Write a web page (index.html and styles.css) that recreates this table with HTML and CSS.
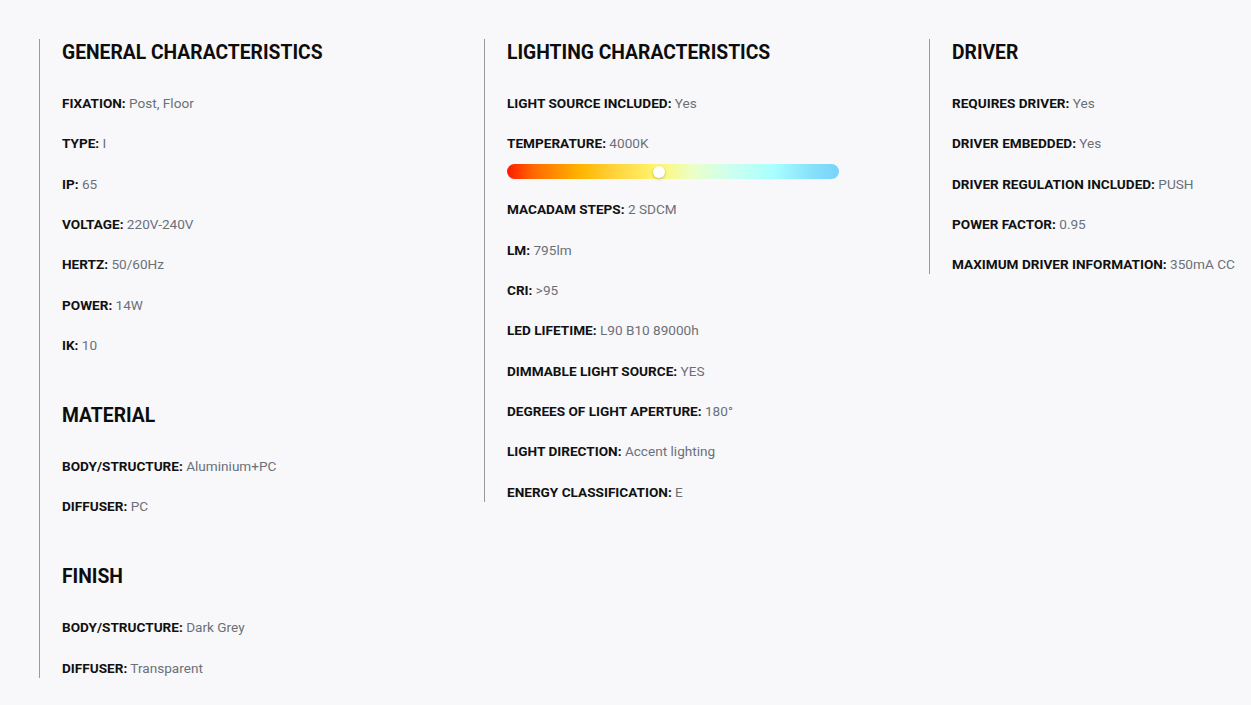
FILE: index.html
```html
<!DOCTYPE html>
<html lang="en">
<head>
<meta charset="utf-8">
<title>Specifications</title>
<link rel="stylesheet" href="styles.css">
</head>
<body>
<div class="specs">
  <div class="col">
    <section class="group">
      <h2>GENERAL CHARACTERISTICS</h2>
      <div class="row"><b>FIXATION:</b> <span>Post, Floor</span></div>
      <div class="row"><b>TYPE:</b> <span>I</span></div>
      <div class="row"><b>IP:</b> <span>65</span></div>
      <div class="row"><b>VOLTAGE:</b> <span>220V-240V</span></div>
      <div class="row"><b>HERTZ:</b> <span>50/60Hz</span></div>
      <div class="row"><b>POWER:</b> <span>14W</span></div>
      <div class="row"><b>IK:</b> <span>10</span></div>
    </section>
    <section class="group">
      <h2>MATERIAL</h2>
      <div class="row"><b>BODY/STRUCTURE:</b> <span>Aluminium+PC</span></div>
      <div class="row"><b>DIFFUSER:</b> <span>PC</span></div>
    </section>
    <section class="group">
      <h2>FINISH</h2>
      <div class="row"><b>BODY/STRUCTURE:</b> <span>Dark Grey</span></div>
      <div class="row"><b>DIFFUSER:</b> <span>Transparent</span></div>
    </section>
  </div>
  <div class="col">
    <section class="group">
      <h2>LIGHTING CHARACTERISTICS</h2>
      <div class="row"><b>LIGHT SOURCE INCLUDED:</b> <span>Yes</span></div>
      <div class="row row-temp">
        <div><b>TEMPERATURE:</b> <span>4000K</span></div>
        <div class="temp-bar"><i class="knob"></i></div>
      </div>
      <div class="row"><b>MACADAM STEPS:</b> <span>2 SDCM</span></div>
      <div class="row"><b>LM:</b> <span>795lm</span></div>
      <div class="row"><b>CRI:</b> <span>&gt;95</span></div>
      <div class="row"><b>LED LIFETIME:</b> <span>L90 B10 89000h</span></div>
      <div class="row"><b>DIMMABLE LIGHT SOURCE:</b> <span>YES</span></div>
      <div class="row"><b>DEGREES OF LIGHT APERTURE:</b> <span>180°</span></div>
      <div class="row"><b>LIGHT DIRECTION:</b> <span>Accent lighting</span></div>
      <div class="row"><b>ENERGY CLASSIFICATION:</b> <span>E</span></div>
    </section>
  </div>
  <div class="col">
    <section class="group">
      <h2>DRIVER</h2>
      <div class="row"><b>REQUIRES DRIVER:</b> <span>Yes</span></div>
      <div class="row"><b>DRIVER EMBEDDED:</b> <span>Yes</span></div>
      <div class="row"><b>DRIVER REGULATION INCLUDED:</b> <span>PUSH</span></div>
      <div class="row"><b>POWER FACTOR:</b> <span>0.95</span></div>
      <div class="row"><b>MAXIMUM DRIVER INFORMATION:</b> <span>350mA CC</span></div>
    </section>
  </div>
</div>
</body>
</html>
```

FILE: styles.css
```css
html, body {
  margin: 0;
  padding: 0;
  background: #f8f8fa;
}
body {
  font-family: Roboto, "Liberation Sans", Arial, sans-serif;
  color: #111;
  overflow: hidden;
}
.specs {
  display: grid;
  grid-template-columns: 445px 445px 1fr;
  align-items: start;
  padding: 39px 0 0 39px;
}
.col {
  border-left: 1px solid #9a9a9a;
  padding: 0 0 0 22px;
}
.group + .group {
  margin-top: 47px;
}
h2 {
  margin: 0 0 27px;
  font-size: 19.3px;
  line-height: 27px;
  font-weight: 700;
  color: #0d0d0d;
}
.row {
  font-size: 13.6px;
  line-height: 20px;
  margin-bottom: 20.33px;
}
.row:last-child {
  margin-bottom: 0;
}
.row b {
  font-weight: 700;
  color: #111;
}
.row span {
  color: #6b7078;
}
.row-temp {
  margin-bottom: 20px;
}
.temp-bar {
  position: relative;
  margin-top: 11px;
  width: 332px;
  height: 15px;
  border-radius: 8px;
  background: linear-gradient(90deg, #ff1a00 0%, #ff6a00 8%, #ffb400 22%, #ffd23a 32%, #fff66e 45%, #eaffc8 56%, #d0ffec 66%, #aaffff 80%, #86e0fb 92%, #78d4f8 100%);
}
.knob {
  position: absolute;
  left: 146px;
  top: 1.5px;
  width: 12px;
  height: 12px;
  border-radius: 50%;
  background: #fff;
  box-shadow: 0 1px 3px rgba(0, 0, 0, 0.25);
}
```
